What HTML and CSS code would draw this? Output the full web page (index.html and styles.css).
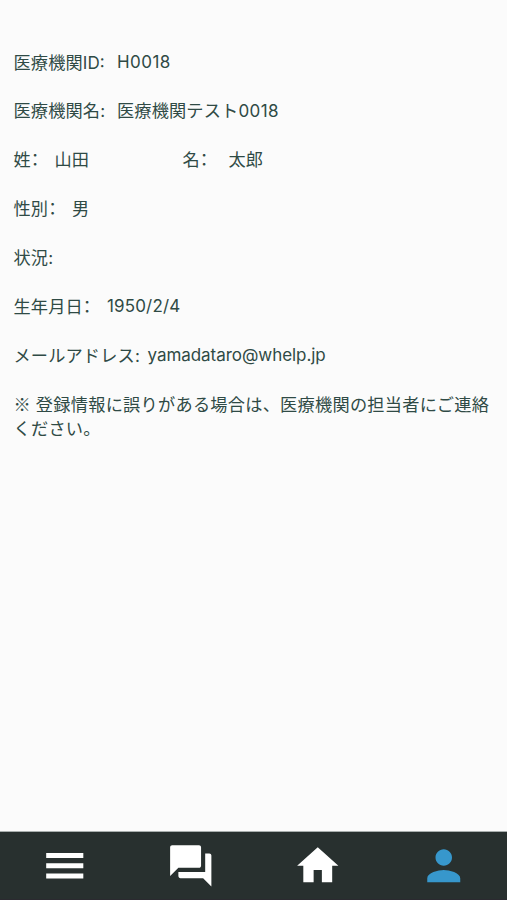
FILE: index.html
```html
<!DOCTYPE html>
<html lang="ja">
<head>
<meta charset="utf-8">
<title>登録情報</title>
<link rel="stylesheet" href="styles.css">
</head>
<body>
<main class="profile">
  <div class="row"><span class="label label-id">医療機関<span class="latin">ID:</span></span><span class="latin digits">H0018</span></div>
  <div class="row"><span class="label label-id">医療機関名<span class="latin">:</span></span><span>医療機関テスト<span class="latin digits">0018</span></span></div>
  <div class="row"><span class="label label-family">姓<span class="colon">：</span></span><span class="family">山田</span><span class="label label-given">名<span class="colon">：</span></span><span>太郎</span></div>
  <div class="row"><span class="label label-sex">性別<span class="colon">：</span></span><span>男</span></div>
  <div class="row"><span class="label">状況<span class="latin">:</span></span></div>
  <div class="row"><span class="label label-birth">生年月日<span class="colon">：</span></span><span class="latin date">1950/2/4</span></div>
  <div class="row"><span class="label label-mail">メールアドレス<span class="latin">:</span></span><span class="latin mail">yamadataro@whelp.jp</span></div>
  <p class="note">※ 登録情報に誤りがある場合は、医療機関の担当者にご連絡ください。</p>
</main>
<nav class="tabs">
  <a class="tab menu"><svg viewBox="0 0 24 24"><path d="M3 18.200h18v-2.500H3zM3 13.250h18v-2.500H3zM3 8.300h18V5.800H3z"/></svg></a>
  <a class="tab chat"><svg viewBox="0 0 24 24"><path d="M21 6h-2v9H6v2c0 .55.45 1 1 1h11l4 4V7c0-.55-.45-1-1-1zm-4 6V3c0-.55-.45-1-1-1H3c-.55 0-1 .45-1 1v14l4-4h10c.55 0 1-.45 1-1z"/></svg></a>
  <a class="tab"><svg viewBox="0 0 24 24"><path d="M10 20v-6h4v6h5v-8h3L12 3 2 12h3v8z"/></svg></a>
  <a class="tab active"><svg viewBox="0 0 24 24"><path d="M12 12c2.210 0 4-1.790 4-4s-1.790-4-4-4-4 1.790-4 4 1.790 4 4 4zm0 2c-2.670 0-8 1.340-8 4v2h16v-2c0-2.660-5.330-4-8-4z"/></svg></a>
</nav>
</body>
</html>
```
FILE: styles.css
```css
* { box-sizing: border-box; }
body {
  margin: 0;
  height: 100vh;
  display: flex;
  flex-direction: column;
  background: #fbfbfb;
  color: #2f4a45;
  font-family: "Noto Sans CJK JP", sans-serif;
  font-size: 17.200px;
  letter-spacing: 0.150px;
  line-height: 24.500px;
}
.profile { flex: 1; padding: 49.600px 10px 0 13.500px; }
.row { display: flex; height: 24.500px; margin-bottom: 24.400px; white-space: nowrap; }
.latin { font-family: Inter, sans-serif; font-size: 17px; letter-spacing: 0; }
.digits { letter-spacing: 0.450px; }
.date { letter-spacing: 0.150px; }
.mail { letter-spacing: -0.050px; }
.colon { font-feature-settings: "halt"; }
.label-id { width: 103.500px; }
.label-family { width: 41px; }
.family { width: 128px; }
.label-given { width: 46px; }
.label-sex { width: 58.500px; }
.label-birth { width: 93.500px; }
.label-mail { width: 134px; }
.note { margin: 0; letter-spacing: 0.260px; word-spacing: 0.800px; }
.tabs {
  display: flex;
  height: 69px;
  border-top: 1px solid #a9afae;
  border-bottom: 1px solid #2b2a30;
  background: #28302f;
}
.tab { flex: 1; display: flex; align-items: center; justify-content: center; color: #fff; }
.tab svg { width: 49.500px; height: 49.500px; fill: currentColor; }
.menu { padding-left: 1px; }
.active { color: #3797cc; }
```
